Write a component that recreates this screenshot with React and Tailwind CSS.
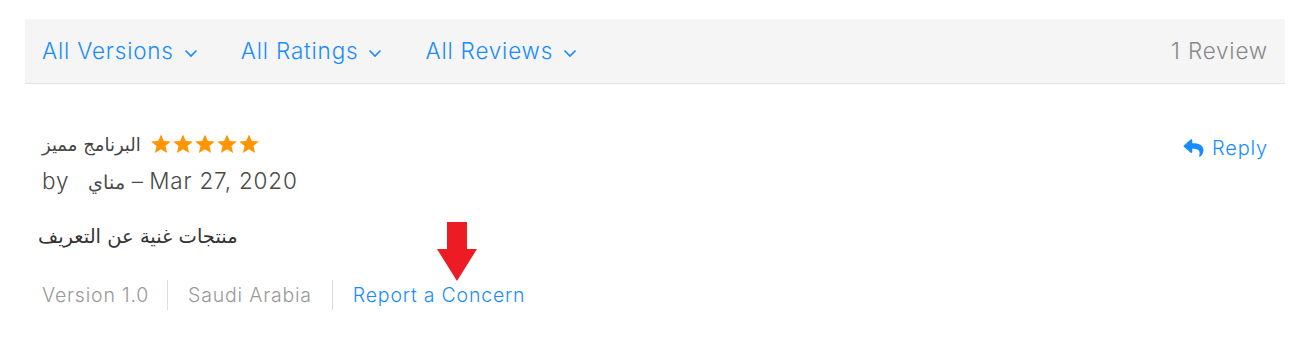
import { FaReply } from 'react-icons/fa';

const Chevron = () => (
  <svg width="14" height="9" viewBox="0 0 14 9" className="ml-[10px] mt-[4px]">
    <path d="M1.5 1.5 L7 7 L12.5 1.5" fill="none" stroke="currentColor" strokeWidth="1.7" />
  </svg>
);

const Filter = ({ text }) => (
  <button className="flex items-center text-[#1a8cff]">
    <span>{text}</span>
    <Chevron />
  </button>
);

const Star = () => (
  <svg width="22" height="22" viewBox="0 0 24 24">
    <path
      d="M12 1.5l3.1 7.1 7.6.6-5.8 5 1.8 7.5L12 17.7l-6.7 4 1.8-7.5-5.8-5 7.6-.6z"
      fill="#ff9500"
    />
  </svg>
);

const filters = ["All Versions", "All Ratings", "All Reviews"];
const arabic = { fontFamily: '"DejaVu Sans", sans-serif' };

function App() {
  return (
    <div
      className="w-[1305px] h-[339px] bg-white pl-[25px] pr-[20px] pt-[19px] tracking-[0.05em]"
      style={{ fontFamily: 'Inter, Roboto, sans-serif' }}
    >
      {/* FILTER BAR */}
      <div className="h-[65px] bg-[#f5f5f5] border-b border-[#e3e3e3] flex items-center justify-between px-[17px] text-[22.5px] font-light">
        <div className="flex items-center gap-[43px]">
          {filters.map((f) => (
            <Filter key={f} text={f} />
          ))}
        </div>
        <span className="text-[#8a8a8a]">1 Review</span>
      </div>

      {/* REVIEW */}
      <div className="relative px-[17px] pt-[47px]">
        <div className="flex justify-between items-start">
          <div>
            <div className="flex items-center h-[26px] text-[#444] tracking-normal">
              <span style={arabic} className="text-[18px] mr-[9px]">البرنامج مميز</span>
              <Star />
              <Star />
              <Star />
              <Star />
              <Star />
            </div>
            <div className="mt-[9px] text-[22.5px] text-[#4a4a4a] leading-[30px] font-light">
              by <span className="ml-[12px] text-[19px] tracking-normal" style={arabic}>مناي</span> – Mar 27, 2020
            </div>
          </div>
          <button className="flex items-center text-[20px] text-[#1a8cff] mt-[2px] font-light">
            <FaReply className="w-[23px] h-[20px] mr-[7px]" />
            Reply
          </button>
        </div>

        <p className="mt-[25px] -ml-[4px] text-[19.5px] text-[#333] tracking-normal" style={arabic}>
          منتجات غنية عن التعريف
        </p>

        <div className="mt-[29px] flex items-center text-[19.5px] text-[#999] font-light">
          <span className="pr-[18px] border-r border-[#ddd] h-[30px] flex items-center">Version 1.0</span>
          <span className="px-[20px] border-r border-[#ddd] h-[30px] flex items-center">Saudi Arabia</span>
          <span className="pl-[20px] text-[#1a8cff]">Report a Concern</span>
        </div>

        {/* red arrow annotation */}
        <svg width="42" height="60" viewBox="0 0 42 60" className="absolute left-[411px] top-[138px]">
          <path d="M11 0 H31 V27 H41 L21 59 L1 27 H11 Z" fill="#ed1c24" />
        </svg>
      </div>
    </div>
  );
}

export default App;
